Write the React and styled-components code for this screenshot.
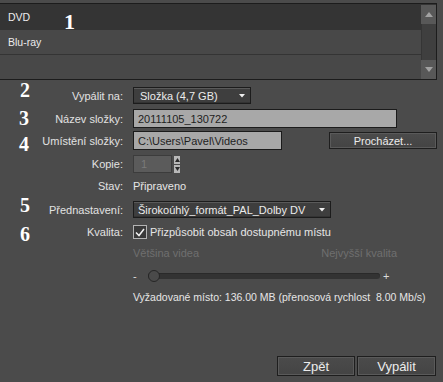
import React from 'react';
import styled, { createGlobalStyle } from 'styled-components';

const Global = createGlobalStyle`
  body {
    margin: 0;
    background: #4b4b4b;
  }
`;

const Page = styled.div`
  position: relative;
  width: 443px;
  height: 382px;
  display: flex;
  flex-direction: column;
  background: #4b4b4b;
  font-family: "Liberation Sans", Arial, sans-serif;
  font-size: 11px;
  color: #e4e4e4;
  overflow: hidden;
`;

/* ---- media list ---- */
const ListFrame = styled.div`
  margin-top: 3px;
  width: 437px;
  height: 77px;
  box-sizing: border-box;
  display: flex;
  border-top: 1px solid #1c1c1c;
  border-right: 1px solid #1c1c1c;
  border-bottom: 1px solid #1c1c1c;
  background: #474747;
`;

const Items = styled.div`
  flex: 1;
  display: flex;
  flex-direction: column;
`;

const Item = styled.div`
  height: ${p => p.$h}px;
  display: flex;
  align-items: center;
  padding-left: 8px;
  font-size: 10.5px;
  color: #ececec;
  background: ${p => (p.$selected ? '#343434' : '#484848')};
  border-bottom: ${p => (p.$line ? '1px solid #343434' : 'none')};
`;

const Scrollbar = styled.div`
  width: 15px;
  padding-top: 1px;
  display: flex;
  flex-direction: column;
  background: #343434;
`;

const ScrollBtn = styled.div`
  height: ${p => p.$h}px;
  background: #585858;
  display: flex;
  align-items: center;
  justify-content: center;
`;

const Track = styled.div`
  flex: 1;
  background: #3f3f3f;
  border-left: 1px solid #353535;
`;

const Arrow = ({ down }) => (
  <svg width="8" height="5" viewBox="0 0 8 5">
    <polygon points={down ? '0,0 8,0 4,5' : '0,5 8,5 4,0'} fill="#a2a2a2" />
  </svg>
);

/* ---- form ---- */
const Form = styled.div`
  display: flex;
  flex-direction: column;
`;

const Row = styled.div`
  display: grid;
  grid-template-columns: 123px 1fr;
  column-gap: 10px;
  align-items: center;
  height: ${p => p.$h}px;
  margin-top: ${p => p.$mt}px;
`;

const Label = styled.div`
  text-align: right;
  white-space: nowrap;
  color: #e2e2e2;
`;

const Controls = styled.div`
  display: flex;
  align-items: center;
  height: 100%;
`;

const Select = styled.div`
  width: ${p => p.$w}px;
  height: 17px;
  box-sizing: border-box;
  display: flex;
  align-items: center;
  justify-content: space-between;
  padding: 0 5px 0 ${p => p.$pad}px;
  border: 1px solid #1c1c1c;
  box-shadow: inset 0 1px 0 #5a5a5a, inset 0 -1px 0 #333;
  background: #3e3e3e;
  color: #ececec;
  white-space: nowrap;
`;

const Caret = () => (
  <svg width="6" height="4" viewBox="0 0 6 4">
    <polygon points="0,0 6,0 3,3.5" fill="#f0f0f0" />
  </svg>
);

const Input = styled.div`
  width: ${p => p.$w}px;
  height: ${p => p.$h}px;
  box-sizing: border-box;
  display: flex;
  align-items: center;
  padding-left: 4px;
  border: 1px solid #1b1b1b;
  background: ${p => (p.$disabled ? '#5b5b5b' : '#a8a8a8')};
  border-color: ${p => (p.$disabled ? '#3c3c3c' : '#1b1b1b')};
  color: ${p => (p.$disabled ? '#7a7a7a' : '#1e1e1e')};
  white-space: nowrap;
`;

const Button = styled.div`
  width: ${p => p.$w}px;
  height: ${p => p.$h}px;
  box-sizing: border-box;
  display: flex;
  align-items: center;
  justify-content: center;
  border: 1px solid #1e1e1e;
  box-shadow: inset 0 0 0 1px #5a5a5a;
  background: linear-gradient(#4b4b4b, #444444);
  color: #ececec;
  font-size: ${p => p.$fs}px;
  margin-left: ${p => p.$ml || 0}px;
`;

const Spin = styled.div`
  margin-left: 2px;
  display: flex;
  flex-direction: column;
  gap: 1px;
`;

const SpinBtn = styled.div`
  width: 6px;
  height: 8px;
  background: #b8b8b8;
  display: flex;
  align-items: center;
  justify-content: center;
`;

const SpinArrow = ({ down }) => (
  <svg width="5" height="4" viewBox="0 0 5 4">
    <polygon points={down ? '0,0 5,0 2.5,4' : '0,4 5,4 2.5,0'} fill="#2a2a2a" />
  </svg>
);

const Value = styled.div`
  color: #e6e6e6;
  white-space: pre;
  font-size: ${p => p.$fs || 11}px;
`;

const Check = styled.div`
  width: 14px;
  height: 14px;
  box-sizing: border-box;
  border: 1px solid #b4b4b4;
  background: #3a3a3a;
  display: flex;
  align-items: center;
  justify-content: center;
  margin-right: 3px;
`;

const Ends = styled.div`
  width: 264px;
  display: flex;
  justify-content: space-between;
  color: #6f6f6f;
`;

const SliderWrap = styled.div`
  width: 258px;
  display: flex;
  align-items: center;
  color: #dcdcdc;
`;

const Sign = styled.span`
  width: ${p => p.$w}px;
  margin-left: ${p => p.$ml || 0}px;
  line-height: 1;
`;

const SliderTrack = styled.div`
  position: relative;
  width: 235px;
  height: 6px;
  border-radius: 3px;
  background: #333333;
  box-shadow: inset 0 1px 0 #2a2a2a;
`;

const Knob = styled.div`
  position: absolute;
  left: 0;
  top: -3px;
  width: 12px;
  height: 12px;
  box-sizing: border-box;
  border-radius: 50%;
  border: 1px solid #262626;
  background: #4a4a4a;
`;

const Footer = styled.div`
  margin-top: auto;
  display: flex;
  justify-content: flex-end;
  gap: 2px;
  padding: 0 7px 6px 0;
`;

const Marker = styled.div`
  position: absolute;
  left: ${p => p.$x}px;
  top: ${p => p.$y}px;
  font-family: "Liberation Serif", "Times New Roman", serif;
  font-weight: bold;
  font-size: ${p => p.$size}px;
  line-height: 1;
  color: #ffffff;
`;

export default function App() {
  return (
    <Page>
      <Global />
      <ListFrame>
        <Items>
          <Item $h={26} $selected>DVD</Item>
          <Item $h={25} $line>Blu-ray</Item>
          <Item $h={24} />
        </Items>
        <Scrollbar>
          <ScrollBtn $h={19}><Arrow /></ScrollBtn>
          <Track />
          <ScrollBtn $h={19}><Arrow down /></ScrollBtn>
        </Scrollbar>
      </ListFrame>

      <Form>
        <Row $h={17} $mt={7}>
          <Label>Vypálit na:</Label>
          <Controls>
            <Select $w={118} $pad={6}>
              <span>Složka (4,7 GB)</span>
              <Caret />
            </Select>
          </Controls>
        </Row>
        <Row $h={19} $mt={5}>
          <Label>Název složky:</Label>
          <Controls>
            <Input $w={264} $h={19}>20111105_130722</Input>
          </Controls>
        </Row>
        <Row $h={19} $mt={3}>
          <Label>Umístění složky:</Label>
          <Controls>
            <Input $w={149} $h={19}>C:\Users\Pavel\Videos</Input>
            <Button $w={108} $h={17} $fs={11} $ml={47}>Procházet...</Button>
          </Controls>
        </Row>
        <Row $h={18} $mt={5}>
          <Label>Kopie:</Label>
          <Controls>
            <Input $w={39} $h={18} $disabled>&nbsp;1</Input>
            <Spin>
              <SpinBtn><SpinArrow /></SpinBtn>
              <SpinBtn><SpinArrow down /></SpinBtn>
            </Spin>
          </Controls>
        </Row>
        <Row $h={18} $mt={4}>
          <Label>Stav:</Label>
          <Value>Připraveno</Value>
        </Row>
        <Row $h={17} $mt={6}>
          <Label>Přednastavení:</Label>
          <Controls>
            <Select $w={198} $pad={4}>
              <span>Širokoúhlý_formát_PAL_Dolby DV</span>
              <Caret />
            </Select>
          </Controls>
        </Row>
        <Row $h={14} $mt={7}>
          <Label>Kvalita:</Label>
          <Controls>
            <Check>
              <svg width="10" height="9" viewBox="0 0 10 9">
                <polyline points="1,4.5 4,7.5 9,1" fill="none" stroke="#f2f2f2" strokeWidth="1.5" />
              </svg>
            </Check>
            <Value>Přizpůsobit obsah dostupnému místu</Value>
          </Controls>
        </Row>
        <Row $h={14} $mt={7}>
          <span />
          <Ends>
            <span>Většina videa</span>
            <span>Nejvyšší kvalita</span>
          </Ends>
        </Row>
        <Row $h={18} $mt={7}>
          <span />
          <SliderWrap>
            <Sign $w={15}>-</Sign>
            <SliderTrack><Knob /></SliderTrack>
            <Sign $w={8} $ml={3}>+</Sign>
          </SliderWrap>
        </Row>
        <Row $h={14} $mt={5}>
          <span />
          <Value $fs={10.5}>Vyžadované místo: 136.00 MB (přenosová rychlost  8.00 Mb/s)</Value>
        </Row>
      </Form>

      <Footer>
        <Button $w={78} $h={20} $fs={13}>Zpět</Button>
        <Button $w={79} $h={20} $fs={13}>Vypálit</Button>
      </Footer>

      <Marker $x={64} $y={11} $size={22}>1</Marker>
      <Marker $x={20} $y={80} $size={20}>2</Marker>
      <Marker $x={19} $y={108} $size={20}>3</Marker>
      <Marker $x={19} $y={134} $size={20}>4</Marker>
      <Marker $x={20} $y={195} $size={20}>5</Marker>
      <Marker $x={20} $y={224} $size={20}>6</Marker>
    </Page>
  );
}
